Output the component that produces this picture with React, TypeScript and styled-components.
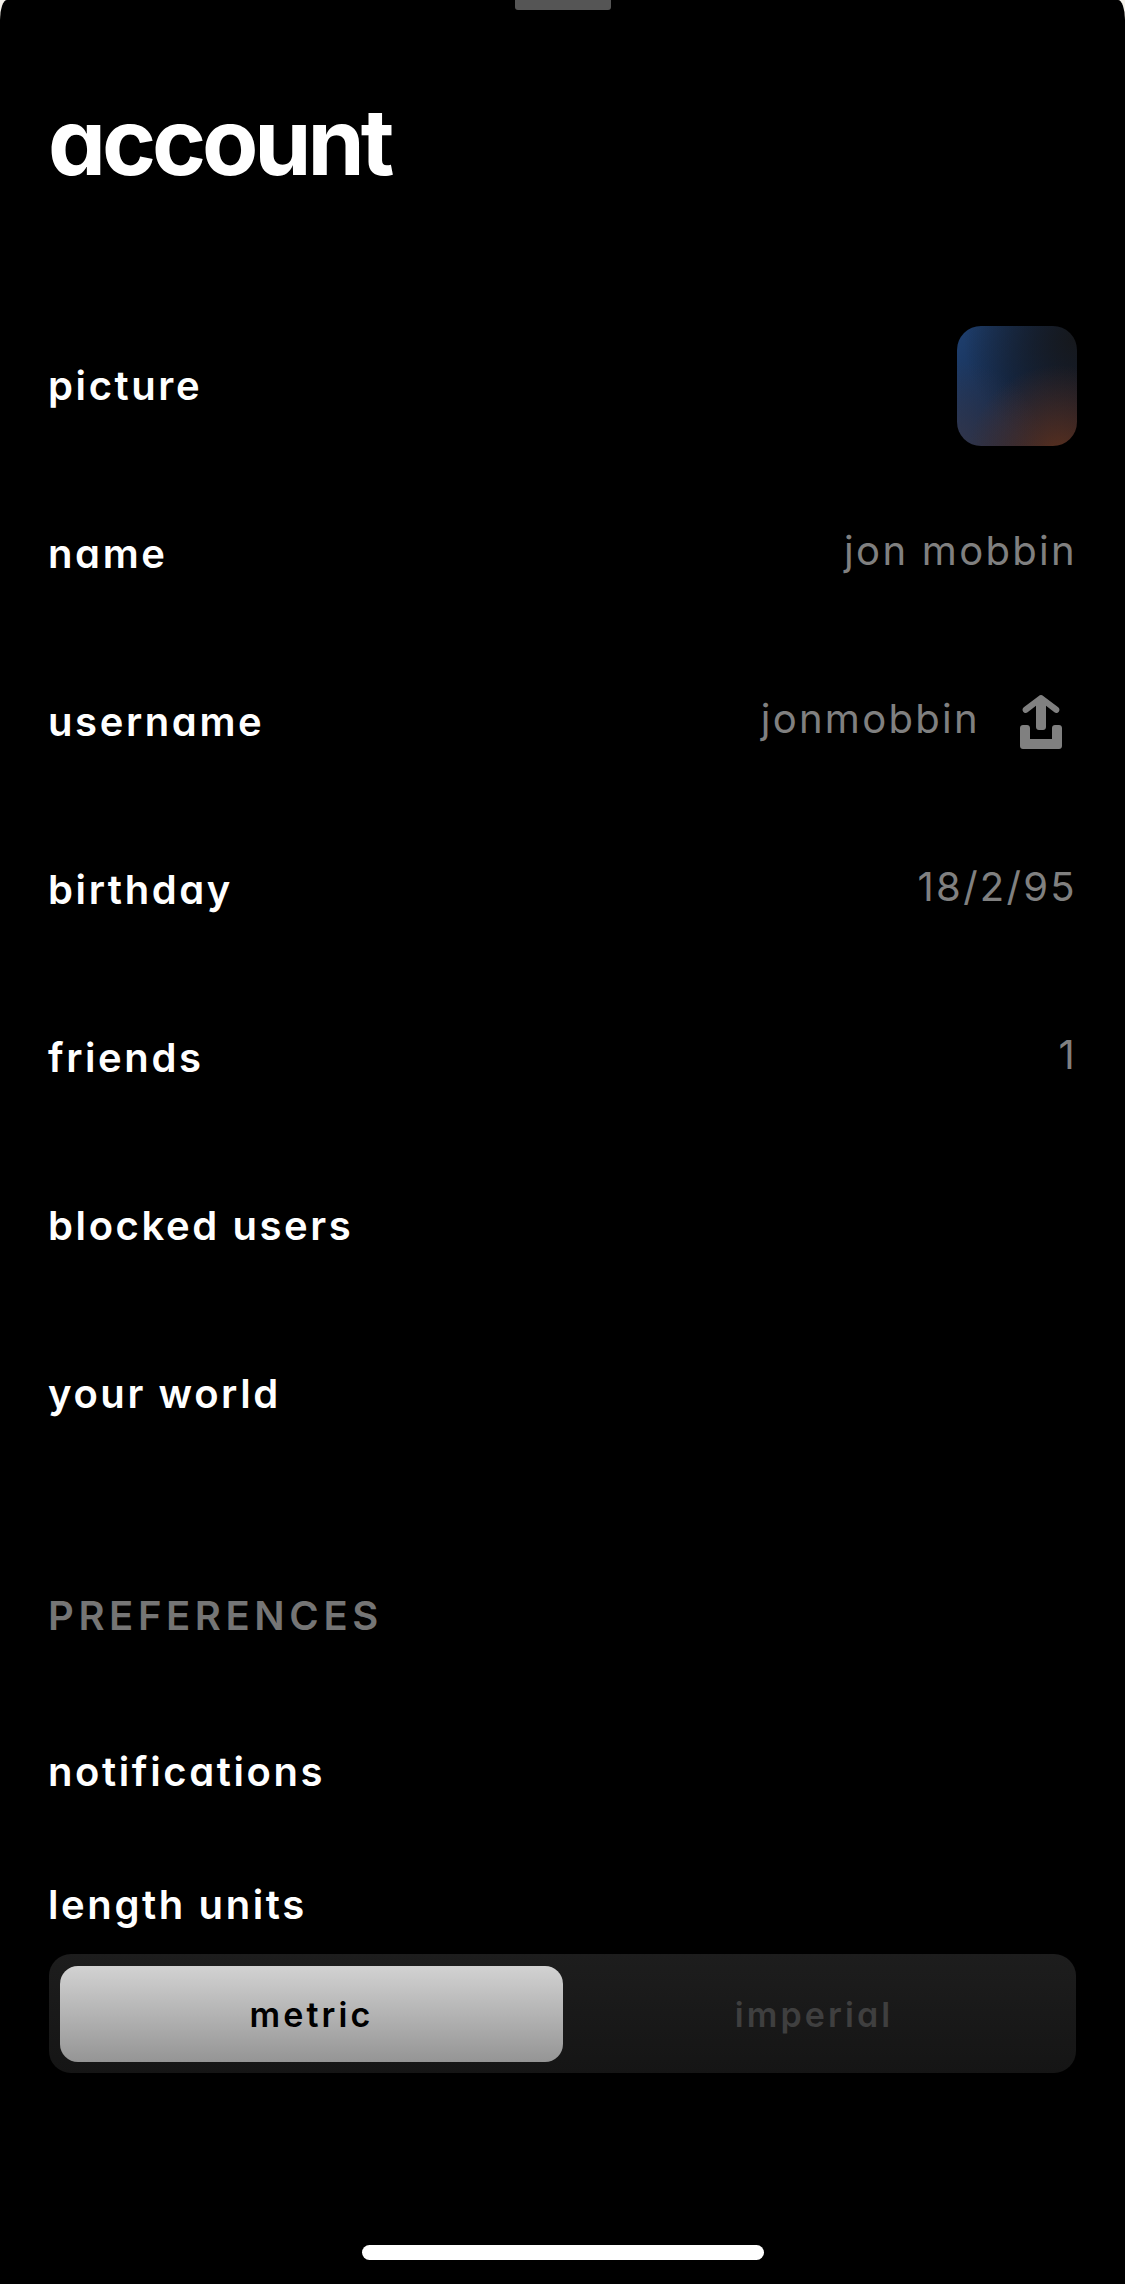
import React from "react";
import styled, { createGlobalStyle } from "styled-components";

const GlobalStyle = createGlobalStyle`
  html, body {
    margin: 0;
    padding: 0;
    background: #f4f1ea;
  }
  body {
    font-family: Inter, "Noto Sans", sans-serif;
    font-feature-settings: "cv11" 1;
  }
`;

const Sheet = styled.div`
  width: 1125px;
  height: 2284px;
  box-sizing: border-box;
  background: #000;
  border-radius: 7px 7px 0 0 / 20px 20px 0 0;
  display: flex;
  flex-direction: column;
  overflow: hidden;
`;

const Grabber = styled.div`
  width: 96px;
  height: 10px;
  margin: 0 auto;
  background: #555;
  border-radius: 0 0 3px 3px;
  flex: none;
`;

const Title = styled.h1`
  margin: 82px 0 0 48px;
  height: 100px;
  font-size: 92px;
  line-height: 100px;
  font-weight: 650;
  letter-spacing: -4.1px;
  color: #fff;
`;

const List = styled.div`
  margin-top: 110px;
  display: flex;
  flex-direction: column;
`;

const Row = styled.div`
  height: 168px;
  padding: 0 48px;
  display: flex;
  align-items: center;
  justify-content: space-between;
`;

const Label = styled.span`
  font-size: 40px;
  line-height: 48px;
  font-weight: 600;
  letter-spacing: 2.6px;
  color: #fff;
`;

const Value = styled.span`
  display: flex;
  align-items: center;
  gap: 40px;
  margin-bottom: 6px;
  font-size: 40px;
  line-height: 48px;
  font-weight: 400;
  letter-spacing: 2.3px;
  color: #808080;
`;

const ShareIcon = styled.svg`
  width: 42px;
  height: 54px;
  margin: 6px 15px 0 0;
  fill: #808080;
`;

const Avatar = styled.div`
  width: 120px;
  height: 120px;
  border-radius: 24px;
  background:
    radial-gradient(circle at 85% 108%, #5a301e 0, rgba(90, 48, 30, 0) 55%),
    radial-gradient(circle at 0 100%, rgba(60, 56, 72, 0.75) 0, rgba(60, 56, 72, 0) 50%),
    radial-gradient(circle at 100% 10%, #16181c 0, rgba(22, 24, 28, 0) 70%),
    linear-gradient(120deg, #1f4070 0, #142a4c 45%, #12203a 70%, #14182a 100%);
`;

const SectionTitle = styled.h2`
  margin: 114px 48px 0;
  height: 48px;
  font-size: 40px;
  line-height: 48px;
  font-weight: 600;
  letter-spacing: 4.6px;
  color: #757575;
`;

const Preference = styled.div<{ $top: number }>`
  margin: ${(p) => p.$top}px 48px 0;
  height: 48px;
  display: flex;
  align-items: center;
`;

const Segmented = styled.div`
  margin: 25px 49px 0;
  height: 119px;
  box-sizing: border-box;
  padding: 12px 11px 11px;
  display: grid;
  grid-template-columns: 503px 1fr;
  background: linear-gradient(#1d1d1d, #151515);
  border-radius: 22px;
`;

const Segment = styled.div<{ $active?: boolean }>`
  display: flex;
  align-items: center;
  justify-content: center;
  border-radius: ${(p) => (p.$active ? "18px" : "0")};
  background: ${(p) => (p.$active ? "linear-gradient(#d2d2d2, #959595)" : "transparent")};
  color: ${(p) => (p.$active ? "#000" : "#3f3f3f")};
  font-size: 34px;
  font-weight: 600;
  letter-spacing: 3.1px;
`;

const HomeBar = styled.div`
  width: 402px;
  height: 15px;
  margin: auto auto 24px;
  background: #fff;
  border-radius: 8px;
  flex: none;
`;

const rows = [
  { label: "name", value: "jon mobbin" },
  { label: "username", value: "jonmobbin", share: true },
  { label: "birthday", value: "18/2/95" },
  { label: "friends", value: "1" },
  { label: "blocked users" },
  { label: "your world" },
];

const App: React.FC = () => {
  return (
    <>
      <GlobalStyle />
      <Sheet>
        <Grabber />
        <Title>account</Title>
        <List>
          <Row>
            <Label>picture</Label>
            <Avatar />
          </Row>
          {rows.map((row) => (
            <Row key={row.label}>
              <Label>{row.label}</Label>
              {row.value && (
                <Value>
                  {row.value}
                  {row.share && (
                    <ShareIcon viewBox="0 0 42 54">
                      <path d="M21 0c.9 0 1.6.3 2.2.9l15 11.4c1.4 1.1 1.7 3 .6 4.4-1.1 1.4-3 1.7-4.4.6L26 10.800V32c0 1.700-1.300 3-3 3h-4c-1.700 0-3-1.300-3-3V10.800l-8.400 6.500c-1.400 1.100-3.300.8-4.400-.6-1.100-1.400-.8-3.300.6-4.400l15-11.400C19.400.3 20.100 0 21 0z" />
                      <path d="M3 30h4c1.700 0 3 1.300 3 3v11h22V33c0-1.700 1.300-3 3-3h4c1.700 0 3 1.300 3 3v18c0 1.700-1.300 3-3 3H3c-1.700 0-3-1.300-3-3V33c0-1.700 1.300-3 3-3z" />
                    </ShareIcon>
                  )}
                </Value>
              )}
            </Row>
          ))}
        </List>
        <SectionTitle>PREFERENCES</SectionTitle>
        <Preference $top={108}>
          <Label>notifications</Label>
        </Preference>
        <Preference $top={85}>
          <Label>length units</Label>
        </Preference>
        <Segmented>
          <Segment $active>metric</Segment>
          <Segment>imperial</Segment>
        </Segmented>
        <HomeBar />
      </Sheet>
    </>
  );
};

export default App;
